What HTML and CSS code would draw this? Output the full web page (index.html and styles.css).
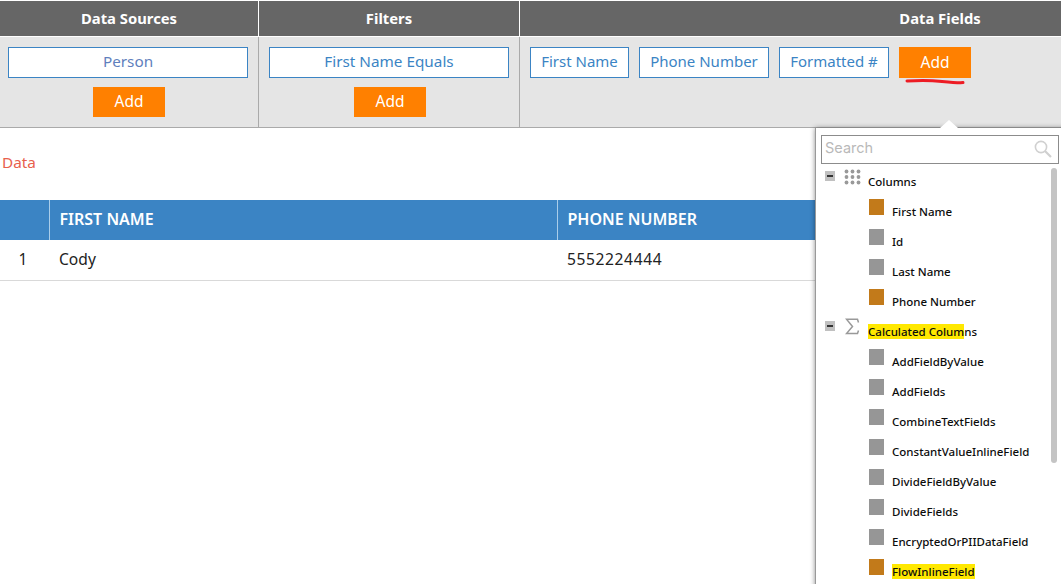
FILE: index.html
```html
<!DOCTYPE html>
<html lang="en">
<head>
<meta charset="utf-8">
<title>Data Fields</title>
<link rel="stylesheet" href="styles.css">
</head>
<body>
<div class="toolbar">
  <section class="group group-sources">
    <h2 class="group-title">Data Sources</h2>
    <div class="group-body stacked">
      <div class="chip chip-wide">Person</div>
      <button class="add">Add</button>
    </div>
  </section>
  <section class="group group-filters">
    <h2 class="group-title">Filters</h2>
    <div class="group-body stacked">
      <div class="chip chip-wide">First Name Equals</div>
      <button class="add">Add</button>
    </div>
  </section>
  <section class="group group-fields">
    <h2 class="group-title title-fields">Data Fields</h2>
    <div class="group-body inline">
      <div class="chip chip-first">First Name</div>
      <div class="chip chip-phone">Phone Number</div>
      <div class="chip chip-format">Formatted #</div>
      <button class="add">Add</button>
      <svg class="scribble" width="62" height="8" viewBox="0 0 62 8"><path d="M3 3 C16 2.2 28 2.4 38 3.4 C46 4.2 54 5 59 4.6" fill="none" stroke="#ed1c24" stroke-width="3" stroke-linecap="round"/></svg>
    </div>
  </section>
</div>

<p class="data-label">Data</p>

<table class="grid">
  <thead>
    <tr><th class="c-num"></th><th class="c-first">FIRST NAME</th><th class="c-phone">PHONE NUMBER</th></tr>
  </thead>
  <tbody>
    <tr><td class="c-num">1</td><td>Cody</td><td class="c-digits">5552224444</td></tr>
  </tbody>
</table>

<aside class="picker">
  <span class="picker-arrow"></span>
  <div class="search">
    <span class="search-text">Search</span>
    <svg class="search-icon" width="18" height="18" viewBox="0 0 18 18"><circle cx="7" cy="7" r="5.6" fill="none" stroke="#d0d0d0" stroke-width="1.6"/><path d="M11 11 L17 17" stroke="#d0d0d0" stroke-width="2.2"/></svg>
  </div>
  <div class="tree">
    <div class="scrollbar"></div>
    <div class="node">
      <span class="toggle"></span>
      <svg class="node-icon icon-dots" width="17" height="16" viewBox="0 0 17 16"><g fill="#999"><circle cx="2.5" cy="2.5" r="1.9"/><circle cx="8.5" cy="2.5" r="1.9"/><circle cx="14.5" cy="2.5" r="1.9"/><circle cx="2.5" cy="8" r="1.9"/><circle cx="8.5" cy="8" r="1.9"/><circle cx="14.5" cy="8" r="1.9"/><circle cx="2.5" cy="13.5" r="1.9"/><circle cx="8.5" cy="13.5" r="1.9"/><circle cx="14.5" cy="13.5" r="1.9"/></g></svg>
      <span class="node-label">Columns</span>
    </div>
    <div class="leaf"><span class="sq used"></span><span class="leaf-label">First Name</span></div>
    <div class="leaf"><span class="sq"></span><span class="leaf-label">Id</span></div>
    <div class="leaf"><span class="sq"></span><span class="leaf-label">Last Name</span></div>
    <div class="leaf"><span class="sq used"></span><span class="leaf-label">Phone Number</span></div>
    <div class="node">
      <span class="toggle"></span>
      <svg class="node-icon icon-sigma" width="15" height="17" viewBox="0 0 15 17"><path d="M13.5 4.5 L12.5 1.2 H1.5 L7.5 8.5 L1.5 15.6 H12.5 L13.5 12.5" fill="none" stroke="#999" stroke-width="1.5"/></svg>
      <span class="node-label"><mark>Calculated Colum</mark>ns</span>
    </div>
    <div class="leaf"><span class="sq"></span><span class="leaf-label">AddFieldByValue</span></div>
    <div class="leaf"><span class="sq"></span><span class="leaf-label">AddFields</span></div>
    <div class="leaf"><span class="sq"></span><span class="leaf-label">CombineTextFields</span></div>
    <div class="leaf"><span class="sq"></span><span class="leaf-label">ConstantValueInlineField</span></div>
    <div class="leaf"><span class="sq"></span><span class="leaf-label">DivideFieldByValue</span></div>
    <div class="leaf"><span class="sq"></span><span class="leaf-label">DivideFields</span></div>
    <div class="leaf"><span class="sq"></span><span class="leaf-label">EncryptedOrPIIDataField</span></div>
    <div class="leaf"><span class="sq used"></span><span class="leaf-label"><mark>FlowInlineField</mark></span></div>
  </div>
</aside>
</body>
</html>
```

FILE: styles.css
```css
* { box-sizing: border-box; }
html, body { height: 100%; }
body {
  margin: 0;
  padding-top: 1px;
  background: #fff;
  font-family: "Noto Sans", "Open Sans", sans-serif;
  overflow: hidden;
  position: relative;
}
.toolbar {
  display: grid;
  grid-template-columns: 259px 261px 1fr;
  border-bottom: 1px solid #aaa;
}
.group { display: flex; flex-direction: column; height: 126px; }
.group-title {
  margin: 0;
  height: 35px;
  background: #666;
  color: #fff;
  font-size: 14.8px;
  font-weight: 700;
  line-height: 34px;
  text-align: center;
  border-right: 1px solid #fff;
}
.group-fields .group-title { border-right: 0; }
.title-fields { padding-left: 299px; }
.group-body {
  flex: 1;
  margin-top: 1px;
  background: #e5e5e5;
  border-right: 1px solid #aaa;
}
.group-fields .group-body { border-right: 0; }
.stacked {
  display: flex;
  flex-direction: column;
  align-items: center;
  gap: 9px;
  padding: 10px 10px 0 8px;
}
.stacked .add { margin-left: 2px; }
.group-filters .stacked { padding-left: 10px; }
.inline {
  position: relative;
  display: flex;
  align-items: flex-start;
  gap: 10px;
  padding: 10px 0 0 10px;
}
.chip {
  height: 31px;
  border: 1px solid #3b84c4;
  background: #fff;
  color: #3b84c4;
  font-size: 15.3px;
  line-height: 27px;
  text-align: center;
  white-space: nowrap;
}
.inline .chip { font-size: 15px; }
.chip-wide { width: 240px; }
.group-sources .chip-wide { color: #5f7fbd; }
.chip-first { width: 99px; }
.chip-phone { width: 130px; }
.chip-format { width: 110px; }
.add {
  width: 72px;
  height: 30px;
  padding: 0 0 2px;
  border: 0;
  background: #ff8000;
  color: #fff;
  font: 15.5px "Noto Sans", "Open Sans", sans-serif;
}
.inline .add { height: 31px; }
.scribble { position: absolute; left: 384px; top: 41px; }
.data-label {
  margin: 0;
  height: 72px;
  padding: 24px 0 0 2px;
  color: #e8604c;
  font-size: 15.3px;
  line-height: 20px;
}
.grid {
  width: 100%;
  border-collapse: collapse;
  table-layout: fixed;
  font-size: 15.6px;
}
.grid th {
  height: 40px;
  padding: 0 0 3px 10px;
  background: #3b84c4;
  color: #fff;
  font-size: 16px;
  font-weight: 600;
  text-align: left;
  border-left: 1px solid #a9cdea;
}
.grid th:first-child { border-left: 0; }
.grid td {
  height: 40px;
  padding: 0 0 2px 10px;
  color: #222;
  border-bottom: 1px solid #d9d9d9;
}
.grid .c-num { width: 49px; padding: 0 3px 2px 0; text-align: center; }
.grid .c-first { width: 508px; }
.grid .c-digits { letter-spacing: .6px; }
.picker {
  position: absolute;
  left: 815px;
  top: 128px;
  width: 260px;
  height: 470px;
  background: #fff;
  border-left: 1px solid #999;
  box-shadow: 0 0 5px rgba(0, 0, 0, .45);
  padding: 7px 0 0 5px;
}
.picker-arrow {
  position: absolute;
  left: 124px;
  top: -8px;
  width: 0;
  height: 0;
  border-left: 9px solid transparent;
  border-right: 9px solid transparent;
  border-bottom: 8px solid #fff;
}
.search {
  position: relative;
  width: 238px;
  height: 29px;
  border: 1px solid #8c8c8c;
  padding-left: 3px;
  font-family: "Inter", "Noto Sans", sans-serif;
  font-size: 14.5px;
  line-height: 24px;
  color: #b9b9b9;
}
.search-icon { position: absolute; right: 6px; top: 4px; }
.tree { position: relative; padding-top: 2px; }
.scrollbar {
  position: absolute;
  left: 230px;
  top: 4px;
  width: 6px;
  height: 295px;
  border-radius: 3px;
  background: #c4c4c4;
}
.node, .leaf {
  position: relative;
  height: 30px;
  color: #0c0c0c;
  font-size: 11.5px;
  font-weight: 500;
  white-space: nowrap;
}
.toggle {
  position: absolute;
  left: 4px;
  top: 5px;
  width: 10px;
  height: 10px;
  background: #c0c0c0;
}
.toggle::after {
  content: "";
  position: absolute;
  left: 2px;
  top: 4px;
  width: 6px;
  height: 2px;
  background: #333;
}
.node-icon { position: absolute; left: 23px; }
.icon-dots { top: 3px; }
.icon-sigma { left: 24px; top: 2px; }
.node-label { position: absolute; left: 47px; top: 8px; line-height: 16px; }
.sq {
  position: absolute;
  left: 48px;
  top: 3px;
  width: 15px;
  height: 16px;
  background: #969696;
}
.sq.used { background: #c27a1a; }
.leaf-label { position: absolute; left: 71px; top: 8px; line-height: 16px; }
mark { background: #ffe800; color: inherit; }
```
